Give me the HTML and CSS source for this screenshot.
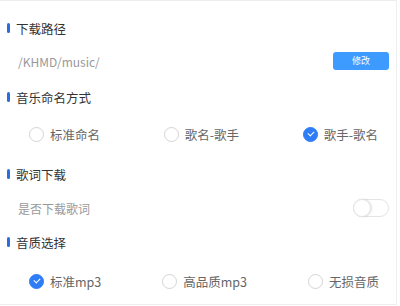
FILE: index.html
```html
<!DOCTYPE html>
<html lang="zh-Hans-CN">
<head>
	<meta charset="UTF-8">
	<title>设置</title>
	<link rel="stylesheet" href="styles.css">
</head>
<body>
<div class="setting">
	<div class="title">下载路径</div>
	<div class="row row-path">
		<span class="path">/KHMD/music/</span>
		<a class="btn">修改</a>
	</div>

	<div class="title">音乐命名方式</div>
	<div class="row row-name">
		<label class="radio"><i></i>标准命名</label>
		<label class="radio"><i></i>歌名-歌手</label>
		<label class="radio on"><i></i>歌手-歌名</label>
	</div>

	<div class="title">歌词下载</div>
	<div class="row row-lrc">
		<span class="path">是否下载歌词</span>
		<span class="switch"><b></b></span>
	</div>

	<div class="title">音质选择</div>
	<div class="row row-quality">
		<label class="radio on"><i></i>标准mp3</label>
		<label class="radio"><i></i>高品质mp3</label>
		<label class="radio"><i></i>无损音质</label>
	</div>
</div>
</body>
</html>
```

FILE: styles.css
```css
html, body {
    margin: 0;
    padding: 0;
    background: #fff;
}

body {
    font: 12.5px "Noto Sans CJK SC", "Noto Sans", sans-serif;
    color: #333;
}

.setting {
    box-sizing: border-box;
    width: 397px;
    height: 305px;
    padding-top: 15px;
    border: 1px solid #eee;
    border-left: none;
}

.title {
    display: flex;
    align-items: center;
    gap: 6px;
    height: 24px;
    padding-left: 7px;
    font-size: 12.5px;
    color: #333;
}

.title:before {
    content: '';
    width: 3px;
    height: 10px;
    border-radius: 2px;
    background: #2b6de0;
}

.row {
    display: flex;
    align-items: center;
    justify-content: space-between;
}

.row-path {
    height: 42px;
    margin-bottom: 3px;
    padding: 0 7px 0 18px;
}

.row-name {
    height: 50px;
    margin-bottom: 3px;
    padding: 0 18px 0 29px;
}

.row-lrc {
    height: 44px;
    padding: 0 7px 0 18px;
}

.row-quality {
    height: 55px;
    padding: 0 17px 0 29px;
}

.path {
    font-size: 12px;
    color: #999;
}

.btn {
    width: 56px;
    height: 18px;
    line-height: 18px;
    text-align: center;
    font-size: 9px;
    color: #fff;
    border-radius: 3px;
    background: #3d9bff;
}

.radio {
    display: flex;
    align-items: center;
    gap: 6px;
    color: #666;
}

.radio i {
    box-sizing: border-box;
    width: 15px;
    height: 15px;
    border: 1px solid #d4d4d4;
    border-radius: 50%;
}

.radio.on i {
    position: relative;
    border-color: #2e7cf6;
    background: #2e7cf6;
}

.radio.on i:after {
    content: '';
    position: absolute;
    left: 4px;
    top: 3px;
    width: 5px;
    height: 3px;
    border-left: 1.5px solid #fff;
    border-bottom: 1.5px solid #fff;
    transform: rotate(-45deg);
}

.switch {
    position: relative;
    box-sizing: border-box;
    width: 36px;
    height: 18px;
    border: 1px solid #e4e4e4;
    border-radius: 9px;
    background: #fff;
}

.switch b {
    position: absolute;
    left: -1px;
    top: -1px;
    box-sizing: border-box;
    width: 18px;
    height: 18px;
    border: 1px solid #e4e4e4;
    border-radius: 50%;
    background: #fff;
    box-shadow: 1px 0 2px rgba(0, 0, 0, .12);
}
```
